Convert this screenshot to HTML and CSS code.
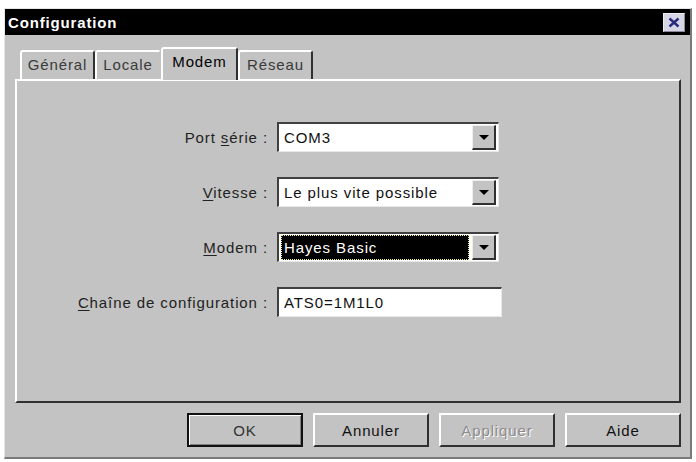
FILE: index.html
```html
<!DOCTYPE html>
<html lang="fr">
<head>
<meta charset="utf-8">
<title>Configuration</title>
<link rel="stylesheet" href="styles.css">
</head>
<body>
<div class="window">
  <div class="titlebar">
    <span class="title">Configuration</span>
    <span class="close"><svg width="12" height="11" viewBox="0 0 12 11"><path d="M1.5 1.5 L10.5 9.5 M10.5 1.5 L1.5 9.5" stroke="#2a2a80" stroke-width="2.4" fill="none"/></svg></span>
  </div>
  <div class="content">
    <div class="tabs">
      <div class="tab t-gen">Général</div>
      <div class="tab t-loc">Locale</div>
      <div class="tab active t-mod">Modem</div>
      <div class="tab t-res">Réseau</div>
    </div>
    <div class="panel">
      <div class="form">
        <label class="lbl">Port <u>s</u>érie :</label>
        <div class="field combo"><span class="val">COM3</span><span class="arrow"><i></i></span></div>

        <label class="lbl"><u>V</u>itesse :</label>
        <div class="field combo"><span class="val">Le plus vite possible</span><span class="arrow"><i></i></span></div>

        <label class="lbl"><u>M</u>odem :</label>
        <div class="field combo"><span class="val sel">Hayes Basic</span><span class="arrow"><i></i></span></div>

        <label class="lbl"><u>C</u>haîne de configuration :</label>
        <div class="field text"><span class="val">ATS0=1M1L0</span></div>
      </div>
    </div>
    <div class="buttons">
      <div class="btn default">OK</div>
      <div class="btn">Annuler</div>
      <div class="btn disabled">Appliquer</div>
      <div class="btn">Aide</div>
    </div>
  </div>
</div>
</body>
</html>
```

FILE: styles.css
```css
html, body {
  margin: 0;
  padding: 0;
  background: #ffffff;
}
body {
  width: 696px;
  height: 462px;
  overflow: hidden;
  font-family: "Liberation Sans", Arial, sans-serif;
  font-size: 15px;
  letter-spacing: 0.9px;
  color: #000;
}
.window {
  margin: 8px 0 0 4px;
  width: 688px;
  height: 451px;
  box-sizing: border-box;
  background: #c3c3c3;
  border-top: 1px solid #e6e6e6;
  border-left: 1px solid #e6e6e6;
  border-right: 2px solid #7a7a7a;
  border-bottom: 2px solid #7a7a7a;
  display: flex;
  flex-direction: column;
}
.titlebar {
  height: 26px;
  background: #000;
  display: flex;
  align-items: center;
  justify-content: space-between;
  padding: 0 5px 0 3px;
}
.title {
  color: #fff;
  font-weight: bold;
  font-size: 15px;
  letter-spacing: 0.85px;
}
.close {
  width: 22px;
  height: 19px;
  box-sizing: border-box;
  background: #d6d6e4;
  border: 1px solid #eeeeee;
  border-right-color: #8a8a9a;
  border-bottom-color: #8a8a9a;
  display: flex;
  align-items: center;
  justify-content: center;
}
.content {
  padding: 12px 9px 0 10px;
  display: flex;
  flex-direction: column;
}
.tabs {
  display: flex;
  align-items: flex-end;
  height: 32px;
  padding-left: 5px;
}
.tab {
  height: 29px;
  box-sizing: border-box;
  border-top: 2px solid #ffffff;
  border-left: 2px solid #ffffff;
  border-right: 2px solid #303030;
  border-radius: 3px 3px 0 0;
  display: flex;
  align-items: center;
  justify-content: center;
  color: #3a3a3a;
  padding-bottom: 2px;
}
.t-gen { width: 75px; }
.t-loc { width: 66px; border-right-color: #c3c3c3; }
.t-mod { width: 77px; }
.t-res { width: 75px; }
.tab.active {
  height: 33px;
  margin-bottom: -1px;
  background: #c3c3c3;
  position: relative;
  z-index: 1;
  color: #000;
  padding-bottom: 6px;
}
.panel {
  height: 324px;
  box-sizing: border-box;
  border-top: 2px solid #ffffff;
  border-left: 2px solid #ffffff;
  border-right: 2px solid #303030;
  border-bottom: 2px solid #303030;
}
.form {
  display: grid;
  grid-template-columns: 251px 225px;
  column-gap: 9px;
  row-gap: 25px;
  padding-top: 41px;
  align-items: center;
}
.lbl {
  text-align: right;
  color: #222;
}
.lbl u {
  text-underline-offset: 2px;
}
.field {
  height: 30px;
  box-sizing: border-box;
  background: #ffffff;
  border-top: 2px solid #404040;
  border-left: 2px solid #404040;
  border-right: 1px solid #e8e8e8;
  border-bottom: 1px solid #e8e8e8;
  display: flex;
  align-items: center;
  padding: 1px 2px;
}
.combo {
  width: 222px;
}
.text {
  width: 225px;
}
.val {
  flex: 1;
  padding-left: 3px;
  color: #111;
  white-space: nowrap;
  overflow: hidden;
}
.val.sel {
  background: #000;
  color: #fff;
  align-self: stretch;
  display: flex;
  align-items: center;
  outline: 1px dotted #f0f090;
  outline-offset: -1px;
  margin-right: 3px;
}
.arrow {
  width: 24px;
  height: 25px;
  flex: none;
  box-sizing: border-box;
  background: #c3c3c3;
  border-top: 1px solid #eeeeee;
  border-left: 1px solid #eeeeee;
  border-right: 2px solid #303030;
  border-bottom: 2px solid #303030;
  display: flex;
  align-items: center;
  justify-content: center;
}
.arrow i {
  width: 0;
  height: 0;
  border-left: 5px solid transparent;
  border-right: 5px solid transparent;
  border-top: 5px solid #000;
}
.buttons {
  display: flex;
  justify-content: flex-end;
  gap: 10px;
  margin-top: 10px;
}
.btn {
  width: 116px;
  height: 34px;
  box-sizing: border-box;
  border-top: 2px solid #ffffff;
  border-left: 2px solid #ffffff;
  border-right: 2px solid #303030;
  border-bottom: 2px solid #303030;
  display: flex;
  align-items: center;
  justify-content: center;
  color: #111;
}
.btn.default {
  border: 2px solid #111;
  box-shadow: inset 1px 1px 0 #ffffff, inset -1px -1px 0 #808080;
  color: #333;
}
.btn.disabled {
  color: #8c8c8c;
  text-shadow: 1px 1px 0 #ffffff;
}
```
